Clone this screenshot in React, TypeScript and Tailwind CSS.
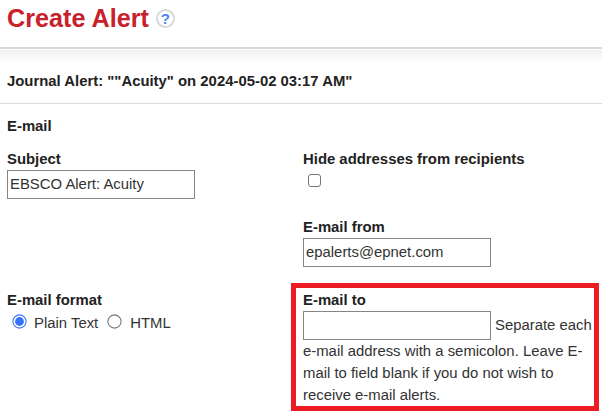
import type { ReactNode } from "react";

function Label({ children }: { children: ReactNode }) {
  return <div className="h-[22px] font-bold leading-[22px] text-[#222]">{children}</div>;
}

function TextField({ value, label }: { value: string; label: string }) {
  return (
    <input
      aria-label={label}
      defaultValue={value}
      className="block h-[29px] w-[188px] shrink-0 border border-[#858585] bg-white px-[2px] pb-[1px] text-[#333] outline-none"
    />
  );
}

function Radio({ checked }: { checked?: boolean }) {
  return (
    <svg width="15" height="15" viewBox="0 0 15 15" className="shrink-0">
      <circle cx="7.5" cy="7.5" r="6.6" fill="white" stroke={checked ? "#3b75f5" : "#777"} strokeWidth="1.1" />
      {checked && <circle cx="7.5" cy="7.5" r="4.4" fill="#3472fb" />}
    </svg>
  );
}

export default function App() {
  return (
    <main className="h-[416px] w-[602px] overflow-hidden bg-white font-['Liberation_Sans',Arial,sans-serif] text-[14.88px] text-[#333]">
      <header className="flex h-[49px] items-start border-b-2 border-[#d8d8d8] pl-[7px]">
        <h1 className="mt-[3px] text-[25.2px] font-bold leading-[30px] text-[#c9202a]">Create Alert</h1>
        <div className="ml-[7px] mt-[9px] flex size-[19px] items-center justify-center rounded-full border-2 border-[#d9d9dc] text-[15px] font-bold leading-none text-[#4c86ee]">
          ?
        </div>
      </header>
      <section className="mt-px h-[54px] border-b border-[#dcdcdc] bg-linear-to-b from-[#f0f0f0] to-white to-[12px] pl-[7px] pt-[20px]">
        <h2 className="whitespace-nowrap font-bold leading-[22px] text-[#222]">
          Journal Alert: ""Acuity" on 2024-05-02 03:17 AM"
        </h2>
      </section>
      <section className="pt-[11px]">
        <h2 className="h-[33px] pl-[7px] font-bold leading-[22px] text-[#222]">E-mail</h2>
        <div className="grid grid-cols-[284px_1fr] pl-[7px]">
          <div className="h-[135px]">
            <Label>Subject</Label>
            <TextField label="Subject" value="EBSCO Alert: Acuity" />
          </div>
          <div className="h-[135px] pl-[12px]">
            <Label>Hide addresses from recipients</Label>
            <div className="h-[46px] pl-[5px] pt-[4px]">
              <div className="size-[13px] rounded-[3px] border border-[#777]" />
            </div>
            <Label>E-mail from</Label>
            <TextField label="E-mail from" value="epalerts@epnet.com" />
          </div>
          <div className="pt-[6px]">
            <Label>E-mail format</Label>
            <div className="flex h-[24px] items-center pl-[5px] leading-[22px]">
              <div className="mb-[3px] flex"><Radio checked /></div>
              <span className="ml-[7px]">Plain Text</span>
              <div className="mb-[3px] ml-[9px] flex"><Radio /></div>
              <span className="ml-[8px]">HTML</span>
            </div>
          </div>
          <div className="h-[128px] w-[308px] border-[5px] border-[#ed1c24] pl-[7px]">
            <div className="pt-px"><Label>E-mail to</Label></div>
            <div className="flex h-[29px] items-center whitespace-nowrap">
              <TextField label="E-mail to" value="" />
              <span className="ml-[4px]">Separate each</span>
            </div>
            <p className="whitespace-nowrap leading-[22px]">
              e-mail address with a semicolon. Leave E-<br />
              mail to field blank if you do not wish to<br />
              receive e-mail alerts.
            </p>
          </div>
        </div>
      </section>
    </main>
  );
}
